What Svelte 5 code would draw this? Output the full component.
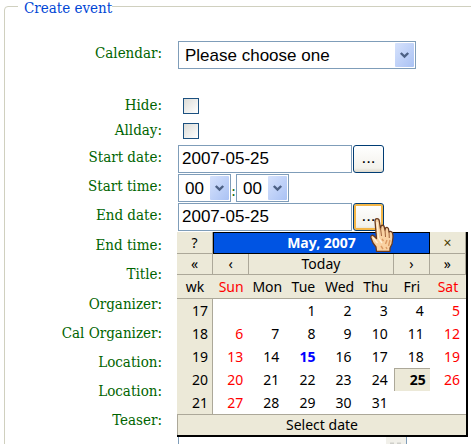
<script>
  const dayNames = ['Sun', 'Mon', 'Tue', 'Wed', 'Thu', 'Fri', 'Sat'];
  const firstWeekday = 2;
  const daysInMonth = 31;
  const today = 15;
  let selected = $state(25);
  const endDate = $derived(`2007-05-${String(selected).padStart(2, '0')}`);

  const weeks = Array.from({ length: 5 }, (_, w) => ({
    number: 17 + w,
    days: Array.from({ length: 7 }, (_, d) => {
      const day = w * 7 + d - firstWeekday + 1;
      return day >= 1 && day <= daysInMonth ? day : null;
    })
  }));
</script>

{#snippet picker(id, options, size, label)}
  <span class="picker {size}">
    <select {id} aria-label={label}>
      {#each options as option}<option>{option}</option>{/each}
    </select>
    <svg class="arrow" viewBox="0 0 19 24" preserveAspectRatio="none" aria-hidden="true">
      <defs>
        <linearGradient id="{id}-shade" x1="0" y1="0" x2="1" y2="1">
          <stop offset="0" stop-color="#d6e2fc" />
          <stop offset="1" stop-color="#aac2f4" />
        </linearGradient>
      </defs>
      <rect width="19" height="24" rx="1" fill="url(#{id}-shade)" />
      <path d="M5.8 10 L9.5 13.6 L13.2 10" fill="none" stroke="#4d6185" stroke-width="2.4" />
    </svg>
  </span>
{/snippet}

<main>
  <fieldset>
    <legend>Create event</legend>

    <div class="row first">
      <label for="calendar">Calendar:</label>
      {@render picker('calendar', ['Please choose one'], 'wide')}
    </div>
    <div class="checks">
      <div class="row short">
        <label for="hide">Hide:</label>
        <input type="checkbox" id="hide" />
      </div>
      <div class="row short">
        <label for="allday">Allday:</label>
        <input type="checkbox" id="allday" />
      </div>
    </div>
    <div class="row">
      <label for="start-date">Start date:</label>
      <div class="field">
        <input type="text" id="start-date" value="2007-05-25" />
        <button type="button" class="browse" aria-label="Choose start date">...</button>
      </div>
    </div>
    <div class="row">
      <label for="start-hour">Start time:</label>
      <div class="field time">
        {@render picker('start-hour', ['00'], 'small')}
        <span>:</span>
        {@render picker('start-minute', ['00'], 'small', 'Start minute')}
      </div>
    </div>
    <div class="row tall">
      <label for="end-date">End date:</label>
      <div class="field">
        <input type="text" id="end-date" value={endDate} />
        <button type="button" class="browse hot" aria-label="Choose end date">...</button>

        <div class="popup">
          <table>
            <thead>
              <tr class="bar top">
                <td><button type="button">?</button></td>
                <th class="title" colspan="6">May, 2007</th>
                <td><button type="button" class="close">×</button></td>
              </tr>
              <tr class="bar">
                <td><button type="button">«</button></td>
                <td><button type="button">‹</button></td>
                <td colspan="4"><button type="button">Today</button></td>
                <td><button type="button">›</button></td>
                <td><button type="button">»</button></td>
              </tr>
              <tr class="names">
                <th>wk</th>
                {#each dayNames as name, i}
                  <th class:weekend={i % 6 === 0}>{name}</th>
                {/each}
              </tr>
            </thead>
            <tbody>
              {#each weeks as week}
                <tr>
                  <th class="week">{week.number}</th>
                  {#each week.days as day, i}
                    <td class:weekend={i % 6 === 0} class:today={day === today}>
                      {#if day}
                        <button type="button" class:selected={day === selected} onclick={() => (selected = day)}>{day}</button>
                      {/if}
                    </td>
                  {/each}
                </tr>
              {/each}
            </tbody>
            <tfoot>
              <tr><td colspan="8">Select date</td></tr>
            </tfoot>
          </table>
        </div>

        <svg class="hand" viewBox="0 0 24 34" aria-hidden="true">
          <path
            d="M5 3 Q5 .7 7 .7 Q9 .7 9.3 3 L10.5 11 L11 8 Q12.5 6.5 14 8 L15 12 L15.5 10 Q17 8.5 18.4 10.5 L19 14 Q20.5 12.5 22.3 14.5 Q23.4 17 22.8 21 L22 26 L20 30 L20 33.3 L6.5 33.3 L6 29 L3 25 L.8 19.5 Q.8 17 3 17.2 L6.5 20.5 Z"
            fill="#f9d2a2" stroke="#6b3a1e" stroke-width="1.3" stroke-linejoin="round" />
          <path d="M10.5 10 L11.5 18 M15 12 L15.5 19 M19 14 L19.3 20" fill="none" stroke="#a0623a" />
          <path d="M7 4 L8.5 20 L12 25 M3 19.5 L7.5 25" fill="none" stroke="#fff0d8" stroke-width="1.4" />
          <path d="M12 21 L13.5 23 M17 22 L15.5 26 M20 22 L18.5 28 M11 28 L13 31 M16 29 L17 31" fill="none" stroke="#dc9a63" stroke-width="1.4" />
        </svg>
      </div>
    </div>
    <div class="row">
      <label for="end-hour">End time:</label>
      <div class="field time">
        {@render picker('end-hour', [''], 'small')}
        {@render picker('end-minute', [''], 'small', 'End minute')}
      </div>
    </div>
    <div class="row tall"><label for="event-title">Title:</label><input type="text" id="event-title" /></div>
    <div class="row"><label for="organizer">Organizer:</label><input type="text" id="organizer" /></div>
    <div class="row"><label for="cal-organizer">Cal Organizer:</label>{@render picker('cal-organizer', [''], 'wide')}</div>
    <div class="row"><label for="location">Location:</label><input type="text" id="location" /></div>
    <div class="row"><label for="cal-location">Location:</label>{@render picker('cal-location', [''], 'wide')}</div>
    <div class="row">
      <label for="teaser">Teaser:</label>
      <div class="field">
        <textarea id="teaser"></textarea>
        <svg class="track" viewBox="0 0 20 58" aria-hidden="true">
          <rect width="20" height="58" fill="#f1f0ea" />
          <path d="M4 35h4M11 35h4" stroke="#cfcfca" stroke-width="3" />
        </svg>
      </div>
    </div>
  </fieldset>
</main>

<style>
  :global(body) {
    margin: 0;
    background: #fff;
  }
  main {
    height: 100vh;
    overflow: hidden;
    font-family: 'DejaVu Serif Condensed', 'DejaVu Serif', serif;
    font-size: 15px;
  }
  fieldset {
    margin: 0 -12px 0 4px;
    padding: 0;
    min-height: 460px;
    border: 1px solid #d0d0bf;
    border-radius: 4px;
  }
  legend {
    margin-left: 13px;
    padding: 4px 0 0 6px;
    color: #0046d5;
    line-height: 8px;
  }
  .row {
    display: flex;
    gap: 16px;
    height: 29px;
  }
  .first {
    margin: 29px 0 23px;
  }
  .checks {
    margin-bottom: 2px;
  }
  .short {
    height: 25px;
    align-items: center;
  }
  .tall {
    height: 30px;
  }
  label {
    width: 157px;
    flex: none;
    color: #006400;
    line-height: 25px;
    text-align: right;
    white-space: nowrap;
  }
  .field {
    position: relative;
    display: flex;
    gap: 1px;
  }
  input[type='text'],
  select,
  textarea {
    box-sizing: border-box;
    height: 28px;
    margin: 0;
    border: 1px solid #7f9db9;
    border-radius: 0;
    background: #fff;
    color: #000;
    font: 17px 'Liberation Sans', Arial, sans-serif;
    outline: none;
  }
  input[type='text'] {
    width: 174px;
    padding: 0 3px;
  }
  input[type='checkbox'] {
    box-sizing: border-box;
    width: 16px;
    height: 16px;
    margin: 0 5px;
    appearance: none;
    border: 1px solid #1c5180;
    background: linear-gradient(135deg, #dcdcd7, #fff);
  }
  textarea {
    width: 229px;
    height: 60px;
    resize: none;
  }
  .track {
    position: absolute;
    top: 1px;
    right: 1px;
    width: 20px;
    height: 58px;
    pointer-events: none;
  }
  .picker {
    position: relative;
    height: 28px;
  }
  .wide {
    width: 238px;
  }
  .small {
    width: 53px;
  }
  select {
    width: 100%;
    padding: 0 6px;
    appearance: none;
  }
  .arrow {
    position: absolute;
    top: 2px;
    right: 2px;
    width: 19px;
    height: 24px;
    pointer-events: none;
  }
  .time {
    gap: 0;
  }
  .time span:not(.picker) {
    width: 5px;
    color: #006400;
    line-height: 34px;
    text-align: center;
  }
  .browse {
    box-sizing: border-box;
    width: 31px;
    height: 28px;
    padding: 0 0 2px;
    border: 1px solid #003c74;
    border-radius: 3px;
    background: linear-gradient(#fff, #f3f2ec 85%, #dcd8cc);
    color: #000;
    font: 17px 'Liberation Sans', Arial, sans-serif;
  }
  .hot {
    box-shadow: inset 0 0 0 2px #f3b648;
  }
  .popup {
    position: absolute;
    z-index: 1;
    top: 29px;
    left: -1px;
    border: solid #000;
    border-width: 0 2px 2px 0;
    background: #fff;
    color: #000;
    font: 14px/20px 'Noto Sans', Tahoma, sans-serif;
  }
  table {
    width: 289px;
    table-layout: fixed;
    border-collapse: separate;
    border-spacing: 0;
  }
  td,
  th {
    box-sizing: border-box;
    padding: 0;
    font-weight: 400;
    text-align: center;
  }
  table button {
    display: block;
    box-sizing: border-box;
    width: 100%;
    height: 100%;
    padding: 0;
    border: 0;
    background: none;
    color: inherit;
    font: inherit;
  }
  .bar td {
    height: 21px;
    border: solid #aca899;
    border-width: 0 1px 1px 0;
    background: #ece9d8;
  }
  .bar .title {
    border: 1px solid #000;
    background: #0054e3;
    color: #fff;
    font-weight: 700;
  }
  .top {
    height: 22px;
  }
  .close {
    color: #4a3c00;
  }
  .names th {
    height: 24px;
    border-bottom: 1px solid #aca899;
    background: #ece9d8;
  }
  tbody th,
  tbody td {
    height: 23px;
    text-align: right;
  }
  tbody button {
    padding-right: 6px;
    text-align: right;
  }
  tbody .week {
    padding-right: 4px;
    border-right: 1px solid #aca899;
    background: #ece9d8;
  }
  .names .weekend,
  .weekend {
    color: #f00;
  }
  .today {
    color: #00f;
    font-weight: 700;
  }
  tbody .selected {
    padding-right: 4px;
    border: solid #aca899;
    border-width: 1px 0 0 1px;
    background: #ece9d8;
    font-weight: 700;
  }
  tfoot td {
    height: 21px;
    border: solid #aca899;
    border-width: 1px 0 0 1px;
    background: #ece9d8;
  }
  .hand {
    position: absolute;
    z-index: 2;
    top: 15px;
    left: 192px;
    width: 24px;
    height: 34px;
    pointer-events: none;
  }
</style>
